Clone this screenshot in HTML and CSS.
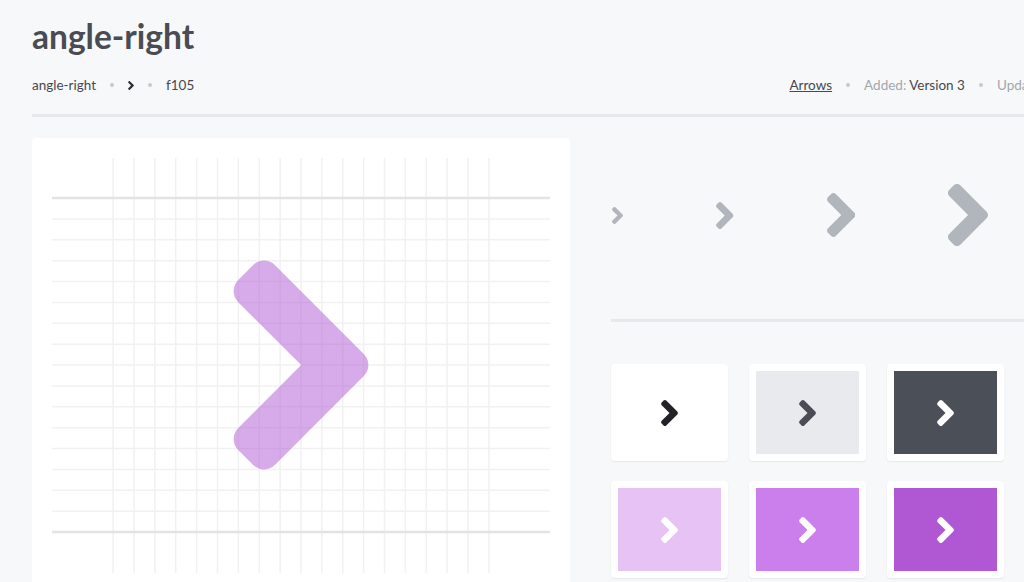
FILE: index.html
```html
<!DOCTYPE html>
<html lang="en">
<head>
    <meta charset="UTF-8">
    <meta name="viewport" content="width=device-width, initial-scale=1.0">
    <title>angle-right</title>
    <link rel="stylesheet" href="styles.css">
</head>
<body>
    <!-- shared glyph -->
    <svg class="defs" aria-hidden="true">
        <symbol id="angle-right" viewBox="24.75 95.95 206.55 320.1">
            <path d="M224.3 273l-136 136c-9.4 9.4-24.6 9.4-33.9 0l-22.6-22.6c-9.4-9.4-9.4-24.6 0-33.9l96.4-96.4-96.4-96.4c-9.4-9.4-9.4-24.6 0-33.9L54.3 103c9.4-9.4 24.6-9.4 33.9 0l136 136c9.5 9.4 9.5 24.6.1 34z"/>
        </symbol>
    </svg>

    <div class="page">
        <h1 class="title">angle-right</h1>

        <div class="meta">
            <div class="meta-group">
                <span>angle-right</span>
                <span class="dot"></span>
                <svg class="ico ico-crumb"><use href="#angle-right"/></svg>
                <span class="dot"></span>
                <span>f105</span>
            </div>
            <div class="meta-group">
                <a href="#" class="category">Arrows</a>
                <span class="dot"></span>
                <span><span class="muted">Added:</span> Version 3</span>
                <span class="dot"></span>
                <span><span class="muted">Updated:</span> Version 5.0.0</span>
            </div>
        </div>

        <div class="main">
            <div class="card">
                <svg class="grid" width="498" height="415" viewBox="0 0 498 415" id="grid"></svg>
            </div>

            <div class="side">
                <div class="sizes">
                    <svg class="ico ico-1x"><use href="#angle-right"/></svg>
                    <svg class="ico ico-2x"><use href="#angle-right"/></svg>
                    <svg class="ico ico-3x"><use href="#angle-right"/></svg>
                    <svg class="ico ico-4x"><use href="#angle-right"/></svg>
                </div>

                <div class="tiles">
                    <div class="tile"><div class="swatch sw-white"><svg class="ico ico-tile"><use href="#angle-right"/></svg></div></div>
                    <div class="tile"><div class="swatch sw-light"><svg class="ico ico-tile"><use href="#angle-right"/></svg></div></div>
                    <div class="tile"><div class="swatch sw-dark"><svg class="ico ico-tile"><use href="#angle-right"/></svg></div></div>
                    <div class="tile"><div class="swatch sw-lilac"><svg class="ico ico-tile"><use href="#angle-right"/></svg></div></div>
                    <div class="tile"><div class="swatch sw-purple"><svg class="ico ico-tile"><use href="#angle-right"/></svg></div></div>
                    <div class="tile"><div class="swatch sw-violet"><svg class="ico ico-tile"><use href="#angle-right"/></svg></div></div>
                </div>
            </div>
        </div>
    </div>

    <script>
        // build the icon grid: 32-unit cells on a 512 tall glyph box
        var svg = document.getElementById("grid");
        var cell = 20.875;
        var cx = 249;
        var baseY = 40;
        var out = "";

        for (var k = -9; k <= 9; k++) {
            var x = cx + k * cell;
            out += '<line x1="' + x + '" y1="0" x2="' + x + '" y2="415" class="thin"/>';
        }
        for (var r = 1; r < 16; r++) {
            var y = baseY + r * cell;
            out += '<line x1="0" y1="' + y + '" x2="498" y2="' + y + '" class="thin"/>';
        }
        out += '<line x1="0" y1="' + baseY + '" x2="498" y2="' + baseY + '" class="thick"/>';
        out += '<line x1="0" y1="' + (baseY + 16 * cell) + '" x2="498" y2="' + (baseY + 16 * cell) + '" class="thick"/>';

        // glyph sits on the 256 x 512 box, centred
        var s = 16 * cell / 512;
        out += '<g transform="translate(' + (cx - 128 * s) + ' ' + baseY + ') scale(' + s + ')">' +
            '<path class="glyph" d="M224.3 273l-136 136c-9.4 9.4-24.6 9.4-33.9 0l-22.6-22.6c-9.4-9.4-9.4-24.6 0-33.9l96.4-96.4-96.4-96.4c-9.4-9.4-9.4-24.6 0-33.9L54.3 103c9.4-9.4 24.6-9.4 33.9 0l136 136c9.5 9.4 9.5 24.6.1 34z"/></g>';

        svg.innerHTML = out;
    </script>
</body>
</html>
```

FILE: styles.css
```css
body {
    margin: 0;
    background-color: #f7f8fa;
    font-family: Lato, "Open Sans", sans-serif;
    color: #45484f;
    overflow: hidden;
}

.defs {
    display: none;
}

.page {
    width: 1100px;
    padding-left: 32px;
}

.title {
    margin: 0;
    padding-top: 16px;
    font-size: 33.5px;
    line-height: 40px;
    font-weight: 700;
    color: #494c53;
}

.meta {
    display: flex;
    justify-content: space-between;
    align-items: center;
    height: 26px;
    margin-top: 16px;
    padding-bottom: 16px;
    border-bottom: 3px solid #e7e8eb;
    font-size: 13.5px;
}

.meta-group {
    display: flex;
    align-items: center;
    gap: 14px;
    white-space: nowrap;
}

.dot {
    width: 4px;
    height: 4px;
    border-radius: 50%;
    background-color: #c6c9ce;
}

.muted {
    color: #a3a7ad;
}

.category {
    color: #45484f;
}

.ico {
    fill: currentColor;
    display: block;
}

.ico-crumb {
    width: 6px;
    height: 9px;
    color: #2c2e33;
}

.main {
    display: grid;
    grid-template-columns: 538px 1fr;
    column-gap: 41px;
    margin-top: 21px;
}

.card {
    background-color: #fff;
    border-radius: 4px;
    padding: 20px 20px 0;
    height: 460px;
}

.grid {
    display: block;
}

.grid .thin {
    stroke: #f1f1f2;
    stroke-width: 1.5;
}

.grid .thick {
    stroke: #e3e3e4;
    stroke-width: 2.5;
}

.grid .glyph {
    fill: #b058d4;
    opacity: 0.5;
}

.sizes {
    display: flex;
    align-items: center;
    gap: 93px;
    height: 154px;
    padding: 0 0 27px 1px;
    color: #b1b6bd;
    border-bottom: 3px solid #e7e8eb;
}

.ico-1x { width: 11px; height: 17px; }
.ico-2x { width: 17.5px; height: 27px; }
.ico-3x { width: 28.5px; height: 44px; }
.ico-4x { width: 40px; height: 62px; }

.tiles {
    display: grid;
    grid-template-columns: repeat(3, 117px);
    column-gap: 21px;
    row-gap: 20px;
    margin-top: 42px;
}

.tile {
    background-color: #fff;
    border-radius: 4px;
    padding: 7px;
    box-shadow: 0 1px 2px rgba(0, 0, 0, 0.07);
}

.swatch {
    height: 83px;
    display: flex;
    align-items: center;
    justify-content: center;
    color: #fff;
}

.ico-tile {
    width: 17px;
    height: 26px;
}

.sw-white { background-color: #fff; color: #222326; }
.sw-light { background-color: #e9eaed; color: #4a4d55; }
.sw-dark { background-color: #4b4f57; }
.sw-lilac { background-color: #e7c2f5; }
.sw-purple { background-color: #cb7fec; }
.sw-violet { background-color: #b058d4; }
```
